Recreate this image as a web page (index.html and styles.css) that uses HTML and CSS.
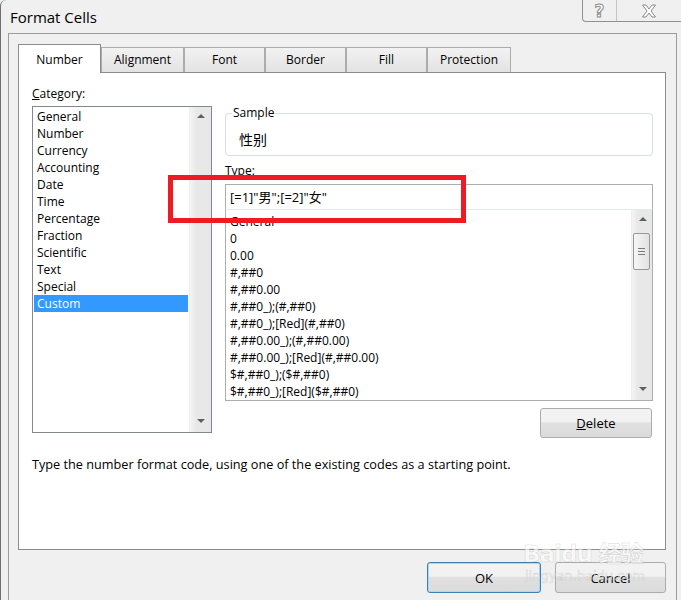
FILE: index.html
```html
<!DOCTYPE html>
<html lang="en">

<head>
    <meta charset="UTF-8" />
    <title>Format Cells</title>
    <link rel="stylesheet" href="styles.css">
</head>

<body>
    <div class="window">
        <div class="titlebar">
            <div class="title">Format Cells</div>
            <div class="caption-buttons">
                <div class="cap-btn help">?</div>
                <div class="cap-btn close">
                    <svg width="16" height="14" viewBox="0 0 16 14">
                        <path d="M1.5 1 H5 L8 5 L11 1 H14.5 L10 7 L14.5 13 H11 L8 9 L5 13 H1.5 L6 7 Z" fill="#fff" stroke="#8a8a8a" stroke-width="1" stroke-linejoin="round" />
                    </svg>
                </div>
            </div>
        </div>

        <div class="frame">
            <!-- Tabs -->
            <div class="tabs">
                <div class="tab active">Number</div>
                <div class="tab w83">Alignment</div>
                <div class="tab">Font</div>
                <div class="tab">Border</div>
                <div class="tab">Fill</div>
                <div class="tab w84">Protection</div>
            </div>

            <div class="tab-page">
                <div class="columns">
                    <!-- Category column -->
                    <div class="left-col">
                        <div class="label"><u>C</u>ategory:</div>
                        <div class="listbox category">
                            <div class="items">
                                <div class="item">General</div>
                                <div class="item">Number</div>
                                <div class="item">Currency</div>
                                <div class="item">Accounting</div>
                                <div class="item">Date</div>
                                <div class="item">Time</div>
                                <div class="item">Percentage</div>
                                <div class="item">Fraction</div>
                                <div class="item">Scientific</div>
                                <div class="item">Text</div>
                                <div class="item">Special</div>
                                <div class="item selected">Custom</div>
                            </div>
                            <div class="scrollbar">
                                <span class="arrow up"></span>
                                <span class="arrow down"></span>
                            </div>
                        </div>
                    </div>

                    <!-- Sample / Type column -->
                    <div class="right-col">
                        <fieldset class="sample">
                            <legend>Sample</legend>
                            <div class="sample-value">性别</div>
                        </fieldset>
                        <div class="label type-label">Type:</div>
                        <div class="type-input">[=1]"男";[=2]"女"</div>
                        <div class="listbox formats">
                            <div class="items">
                                <div class="item">General</div>
                                <div class="item">0</div>
                                <div class="item">0.00</div>
                                <div class="item">#,##0</div>
                                <div class="item">#,##0.00</div>
                                <div class="item">#,##0_);(#,##0)</div>
                                <div class="item">#,##0_);[Red](#,##0)</div>
                                <div class="item">#,##0.00_);(#,##0.00)</div>
                                <div class="item">#,##0.00_);[Red](#,##0.00)</div>
                                <div class="item">$#,##0_);($#,##0)</div>
                                <div class="item">$#,##0_);[Red]($#,##0)</div>
                            </div>
                            <div class="scrollbar">
                                <span class="arrow up"></span>
                                <div class="thumb">
                                    <span></span><span></span><span></span>
                                </div>
                                <span class="arrow down"></span>
                            </div>
                        </div>
                        <button class="button delete"><u>D</u>elete</button>
                    </div>
                </div>

                <p class="hint">Type the number format code, using one of the existing codes as a starting point.</p>
            </div>

            <div class="footer">
                <button class="button ok">OK</button>
                <button class="button cancel">Cancel</button>
            </div>
        </div>
    </div>

    <!-- red highlight drawn over the Type box -->
    <div class="highlight"></div>

    <!-- watermark -->
    <div class="watermark">
        <div class="wm-logo">Bai<span class="paw">du</span> 经验</div>
        <div class="wm-url">jingyan.baidu.com</div>
    </div>
</body>

</html>
```

FILE: styles.css
```css
body {
    margin: 0;
    width: 681px;
    height: 600px;
    overflow: hidden;
    position: relative;
    background-color: #f0f0f0;
    font-family: "Open Sans", "Noto Sans CJK SC", sans-serif;
    font-size: 12px;
    color: #000;
}

.window {
    height: 600px;
    border-left: 1px solid #6f6f6f;
    border-top-left-radius: 6px;
    box-sizing: border-box;
}

.titlebar {
    height: 33px;
    display: flex;
    justify-content: space-between;
    align-items: flex-start;
}

.title {
    padding: 8px 0 0 9px;
    font-size: 15px;
    line-height: 18px;
}

.caption-buttons {
    display: flex;
    height: 22px;
    border: 1px solid #909090;
    border-top: none;
    border-right: none;
    border-bottom-left-radius: 4px;
    box-sizing: border-box;
}

.cap-btn {
    display: flex;
    align-items: center;
    justify-content: center;
}

.help {
    width: 33px;
    border-right: 1px solid #c4c4c4;
    font-family: "DejaVu Sans", sans-serif;
    font-size: 17px;
    font-weight: bold;
    color: #fff;
    -webkit-text-stroke: 1px #8a8a8a;
}

.close {
    width: 64px;
}

.frame {
    margin-left: 7px;
    width: 669px;
    height: 567px;
    box-sizing: border-box;
    border: 1px solid #9c9c9c;
    border-bottom: none;
    padding: 10px 10px 0 9px;
}

/* Tabs */
.tabs {
    display: flex;
    align-items: flex-end;
    height: 28px;
}

.tab {
    width: 81px;
    height: 25px;
    box-sizing: border-box;
    border: 1px solid #acacac;
    border-bottom: none;
    background: linear-gradient(#f2f2f2, #e3e3e3);
    text-align: center;
    line-height: 24px;
}

.tab.w83 {
    width: 83px;
}

.tab.w84 {
    width: 84px;
}

.tab.active {
    width: 83px;
    height: 29px;
    margin-bottom: -1px;
    background: #fff;
    border-color: #8c8c8c;
    line-height: 30px;
    position: relative;
    z-index: 1;
}

.tab-page {
    width: 648px;
    height: 478px;
    box-sizing: border-box;
    background-color: #fff;
    border: 1px solid #8c8c8c;
    padding: 13px 12px 0 13px;
}

.columns {
    display: grid;
    grid-template-columns: 180px 428px;
    column-gap: 13px;
}

.label {
    line-height: 16px;
}

.left-col .label {
    margin-bottom: 4px;
}

/* List boxes */
.listbox {
    display: flex;
    box-sizing: border-box;
    border: 1px solid #828790;
    background-color: #fff;
}

.listbox .items {
    flex: 1;
    overflow: hidden;
}

.item {
    line-height: 17px;
    padding-left: 3px;
    white-space: nowrap;
}

.category {
    height: 327px;
}

.category .items {
    padding-top: 1px;
}

.category .item {
    margin: 0 1px;
}

.item.selected {
    background-color: #3399ff;
    color: #fff;
}

.scrollbar {
    width: 21px;
    position: relative;
    background: linear-gradient(90deg, #f4f4f4, #e8e8e8 30%, #e8e8e8);
    border-left: 1px solid #efefef;
}

.arrow {
    position: absolute;
    left: 7px;
    width: 0;
    height: 0;
    border-left: 4px solid transparent;
    border-right: 4px solid transparent;
}

.arrow.up {
    top: 7px;
    border-bottom: 4px solid #606060;
}

.arrow.down {
    bottom: 9px;
    border-top: 4px solid #606060;
}

/* Right column */
.sample {
    margin: 19px 0 0;
    padding: 9px 0 5px;
    min-width: 0;
    border: 1px solid #d6dde4;
    border-radius: 4px;
}

.sample legend {
    margin-left: 6px;
    padding: 0 1px;
    line-height: 16px;
}

.sample-value {
    padding-left: 13px;
    font-size: 14px;
    line-height: 20px;
}

.type-label {
    margin-top: 7px;
}

.type-input {
    margin-top: 5px;
    height: 26px;
    box-sizing: border-box;
    border: 1px solid #abadb3;
    border-bottom-color: #e3e9ef;
    padding-left: 4px;
    font-size: 13px;
    line-height: 24px;
    white-space: nowrap;
}

.formats {
    height: 191px;
    border-color: #abadb3;
    border-top: none;
}

.formats .items {
    padding-top: 3px;
    padding-left: 1px;
}

.formats .scrollbar {
    width: 20px;
}

.thumb {
    position: absolute;
    left: 1px;
    top: 23px;
    width: 17px;
    height: 37px;
    box-sizing: border-box;
    border: 1px solid #979797;
    border-radius: 2px;
    background: linear-gradient(90deg, #f6f6f6, #e2e2e2);
    display: flex;
    flex-direction: column;
    justify-content: center;
    align-items: center;
    gap: 2px;
}

.thumb span {
    width: 7px;
    height: 1px;
    background-color: #7a7a7a;
}

/* Buttons */
.button {
    font-family: inherit;
    font-size: 12px;
    color: #000;
    box-sizing: border-box;
    border: 1px solid #acacac;
    border-radius: 3px;
    background: linear-gradient(#f2f2f2 45%, #e0e0e0 50%, #dbdbdb);
    padding: 0;
}

.delete {
    display: block;
    margin: 7px 1px 0 auto;
    width: 112px;
    height: 30px;
    font-size: 13px;
}

.hint {
    margin: 18px 0 0;
    font-size: 12.7px;
    line-height: 16px;
}

.footer {
    display: flex;
    justify-content: flex-end;
    gap: 14px;
    margin-top: 12px;
}

.ok {
    width: 114px;
    height: 31px;
    border-color: #3c7fb1;
    box-shadow: inset 0 0 0 1px #a8d8f5;
    font-size: 13px;
}

.cancel {
    width: 111px;
    height: 31px;
    font-size: 13px;
}

/* Overlays */
.highlight {
    position: absolute;
    left: 168px;
    top: 175px;
    width: 298px;
    height: 48px;
    box-sizing: border-box;
    border: 5px solid #ed1c24;
}

.watermark {
    position: absolute;
    left: 523px;
    top: 540px;
    color: rgba(255, 255, 255, 0.6);
    -webkit-text-stroke: 0.5px rgba(150, 150, 150, 0.4);
    pointer-events: none;
}

.wm-logo {
    font-family: "DejaVu Sans", "Noto Sans CJK SC", sans-serif;
    font-size: 23px;
    font-weight: bold;
    line-height: 28px;
    letter-spacing: -1px;
}

.wm-url {
    font-family: "DejaVu Sans", sans-serif;
    font-size: 13px;
    line-height: 16px;
    padding-left: 2px;
}
```
